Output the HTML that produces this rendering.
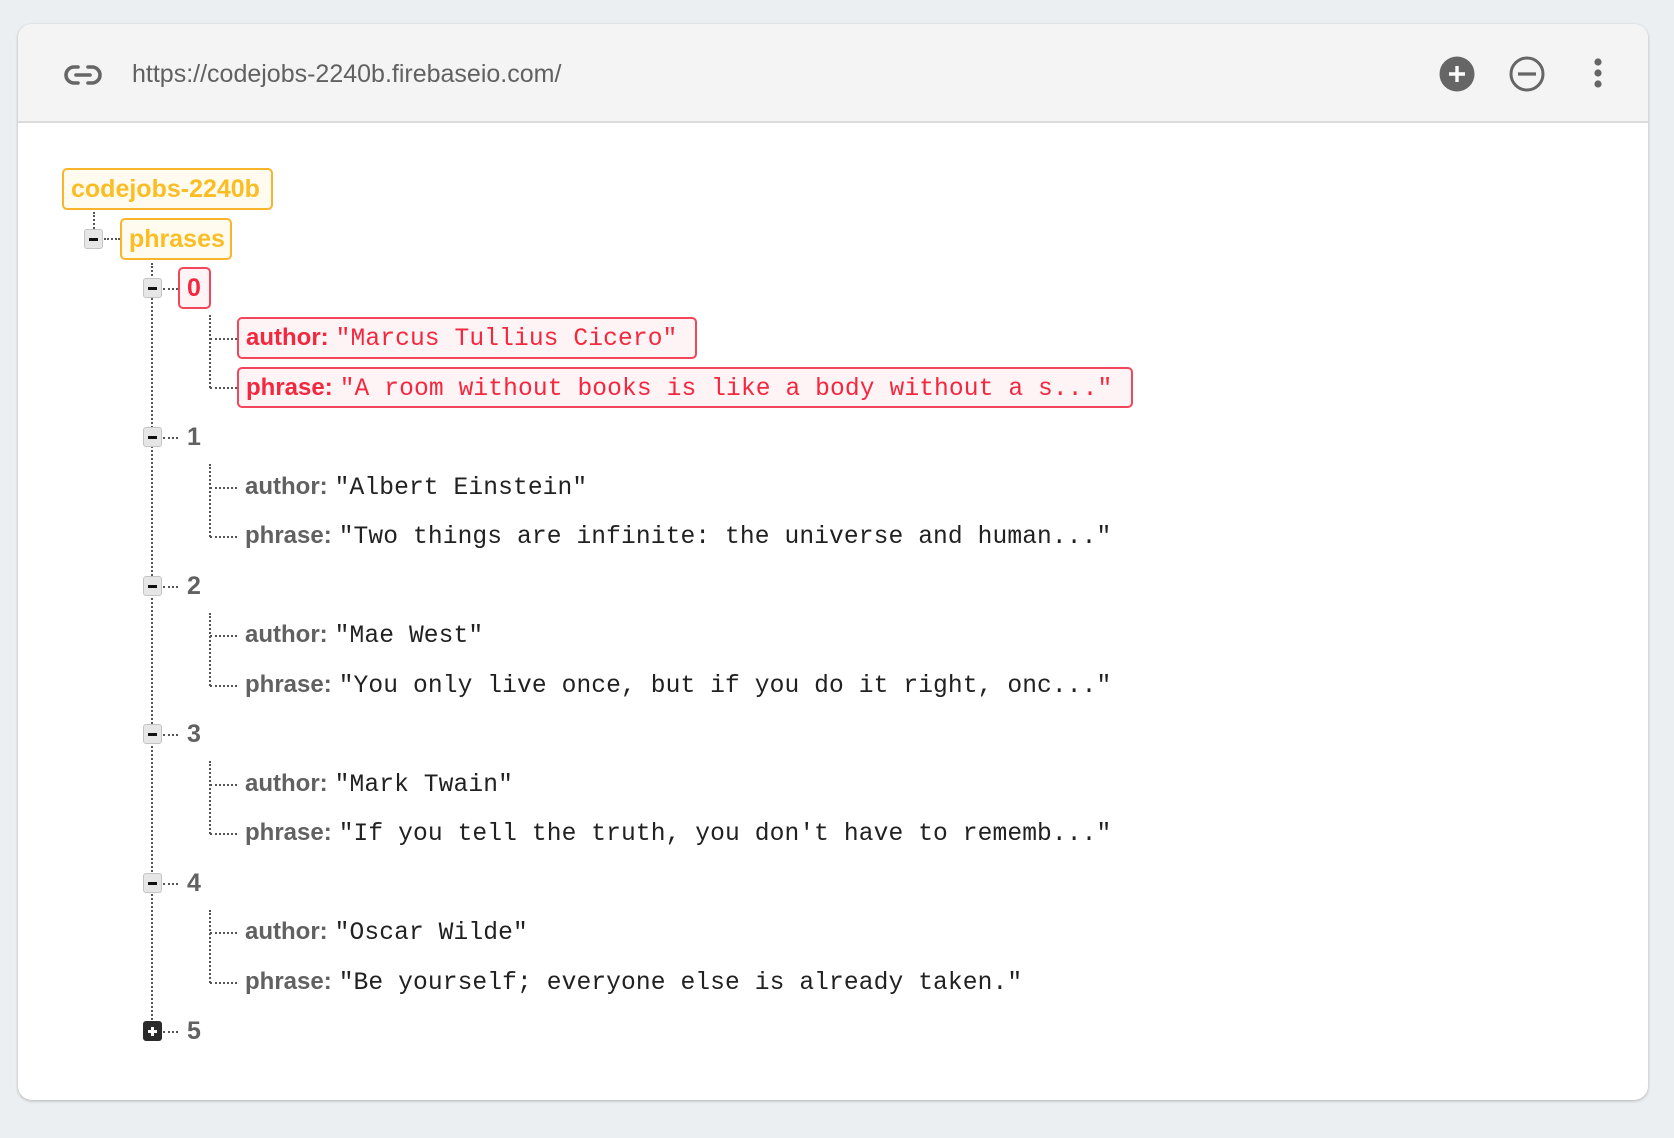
<!DOCTYPE html>
<html><head><meta charset="utf-8"><style>
*{margin:0;padding:0;box-sizing:border-box}
body{width:1674px;height:1138px;background:#eceff1;position:relative;overflow:hidden;font-family:"Liberation Sans",sans-serif}
.card{position:absolute;left:18px;top:24px;width:1630px;height:1076px;background:#fff;border-radius:14px;box-shadow:0 1px 3px rgba(0,0,0,.25);overflow:hidden}
.hdr{position:absolute;left:0;top:0;width:100%;height:99px;background:#f4f4f4;border-bottom:2px solid #dcdcdc}
.a{position:absolute}
.url{left:114px;top:35px;font-size:25px;color:#616161;line-height:30px}
.row{position:absolute;height:40px;line-height:40px;white-space:nowrap;font-size:24px}
.lbl{font-weight:bold;color:#616161}
.val{font-family:"Liberation Mono",monospace;font-size:24.6px;color:#212121;margin-left:7px;letter-spacing:0.1px}
.red .lbl,.red .val{color:#f3283f}
.boxr{border:2px solid #f4465a;background:#fff4f5;border-radius:5px}
.boxa{border:2px solid #f7b52c;background:#fffbef;border-radius:5px;color:#fbbd24;font-weight:bold;font-size:25px}
.tg{position:absolute;width:19px;height:20px;background:#e6e6e6;border:1px solid #c4c4c4;border-radius:3px}
.tg:after{content:"";position:absolute;left:4px;top:8px;width:9px;height:3px;background:#111}
.tg.p{background:#2b2b2b;border-color:#2b2b2b}
.tg.p:after{background:#fff;left:4px;top:8px}
.tg.p:before{content:"";position:absolute;left:7px;top:5px;width:3px;height:9px;background:#fff}
.vl{position:absolute;border-left:2px dotted #555;width:0}
.hl{position:absolute;border-top:2px dotted #555;height:0}
.idx{font-weight:bold;color:#616161;font-size:25px}
</style></head><body>
<div class="card">
<div class="hdr">
<svg class="a" style="left:46px;top:36px" width="38" height="30" viewBox="0 0 38 30"><path d="M14 7H10a8 8 0 0 0 0 16h4M24 7h4a8 8 0 0 1 0 16h-4M12 15h14" fill="none" stroke="#666" stroke-width="3.6" stroke-linecap="round"/></svg>
<div class="a url">https://codejobs-2240b.firebaseio.com/</div>
<svg class="a" style="left:1419px;top:32px" width="40" height="40"><circle cx="20" cy="18" r="17.5" fill="#666"/><path d="M20 10v16M12 18h16" stroke="#fff" stroke-width="3.4"/></svg>
<svg class="a" style="left:1489px;top:32px" width="40" height="40"><circle cx="20" cy="18" r="16" fill="none" stroke="#666" stroke-width="3"/><path d="M11 18h18" stroke="#666" stroke-width="3.2"/></svg>
<svg class="a" style="left:1572px;top:31px" width="16" height="40"><circle cx="8" cy="7" r="3.6" fill="#666"/><circle cx="8" cy="18" r="3.6" fill="#666"/><circle cx="8" cy="29" r="3.6" fill="#666"/></svg>
</div>
</div>
<div id="t" style="position:absolute;left:0;top:0">
<div class="row boxa" style="left:62px;top:168px;width:211px;height:42px;line-height:38px;padding-left:7px">codejobs-2240b</div>
<div class="vl" style="left:93px;top:212px;height:20px"></div>
<div class="tg" style="left:84px;top:229px"></div>
<div class="hl" style="left:104px;top:238px;width:16px"></div>
<div class="row boxa" style="left:120px;top:218px;width:112px;height:42px;line-height:38px;padding-left:7px">phrases</div>
<div class="vl" style="left:151px;top:263px;height:760px"></div>

<div class="tg" style="left:143px;top:278px"></div>
<div class="hl" style="left:163px;top:288px;width:15px"></div>
<div class="row boxr red" style="left:178px;top:267px;width:33px;height:42px;line-height:38px;padding-left:7px"><span class="idx" style="color:#f3283f">0</span></div>
<div class="vl" style="left:209px;top:315px;height:73px"></div>
<div class="hl" style="left:210px;top:338px;width:27px"></div>
<div class="hl" style="left:210px;top:387px;width:27px"></div>
<div class="row boxr red" style="left:237px;top:317px;width:460px;height:42px;line-height:38px;padding-left:7px"><span class="lbl">author:</span><span class="val">"Marcus Tullius Cicero"</span></div>
<div class="row boxr red" style="left:237px;top:367px;width:896px;height:41px;line-height:37px;padding-left:7px"><span class="lbl">phrase:</span><span class="val">"A room without books is like a body without a s..."</span></div>

<div class="tg" style="left:143px;top:427px"></div>
<div class="hl" style="left:163px;top:437px;width:15px"></div>
<div class="row" style="left:187px;top:417px"><span class="idx">1</span></div>
<div class="vl" style="left:209px;top:464px;height:73px"></div>
<div class="hl" style="left:210px;top:487px;width:27px"></div>
<div class="hl" style="left:210px;top:536px;width:27px"></div>
<div class="row" style="left:245px;top:467px"><span class="lbl">author:</span><span class="val">"Albert Einstein"</span></div>
<div class="row" style="left:245px;top:516px"><span class="lbl">phrase:</span><span class="val">"Two things are infinite: the universe and human..."</span></div>

<div class="tg" style="left:143px;top:576px"></div>
<div class="hl" style="left:163px;top:586px;width:15px"></div>
<div class="row" style="left:187px;top:566px"><span class="idx">2</span></div>
<div class="vl" style="left:209px;top:613px;height:73px"></div>
<div class="hl" style="left:210px;top:635px;width:27px"></div>
<div class="hl" style="left:210px;top:685px;width:27px"></div>
<div class="row" style="left:245px;top:615px"><span class="lbl">author:</span><span class="val">"Mae West"</span></div>
<div class="row" style="left:245px;top:665px"><span class="lbl">phrase:</span><span class="val">"You only live once, but if you do it right, onc..."</span></div>

<div class="tg" style="left:143px;top:724px"></div>
<div class="hl" style="left:163px;top:734px;width:15px"></div>
<div class="row" style="left:187px;top:714px"><span class="idx">3</span></div>
<div class="vl" style="left:209px;top:761px;height:73px"></div>
<div class="hl" style="left:210px;top:784px;width:27px"></div>
<div class="hl" style="left:210px;top:833px;width:27px"></div>
<div class="row" style="left:245px;top:764px"><span class="lbl">author:</span><span class="val">"Mark Twain"</span></div>
<div class="row" style="left:245px;top:813px"><span class="lbl">phrase:</span><span class="val">"If you tell the truth, you don't have to rememb..."</span></div>

<div class="tg" style="left:143px;top:873px"></div>
<div class="hl" style="left:163px;top:883px;width:15px"></div>
<div class="row" style="left:187px;top:863px"><span class="idx">4</span></div>
<div class="vl" style="left:209px;top:910px;height:73px"></div>
<div class="hl" style="left:210px;top:932px;width:27px"></div>
<div class="hl" style="left:210px;top:982px;width:27px"></div>
<div class="row" style="left:245px;top:912px"><span class="lbl">author:</span><span class="val">"Oscar Wilde"</span></div>
<div class="row" style="left:245px;top:962px"><span class="lbl">phrase:</span><span class="val">"Be yourself; everyone else is already taken."</span></div>

<div class="tg p" style="left:143px;top:1021px"></div>
<div class="hl" style="left:163px;top:1031px;width:15px"></div>
<div class="row" style="left:187px;top:1011px"><span class="idx">5</span></div>
</div>
</body></html>
